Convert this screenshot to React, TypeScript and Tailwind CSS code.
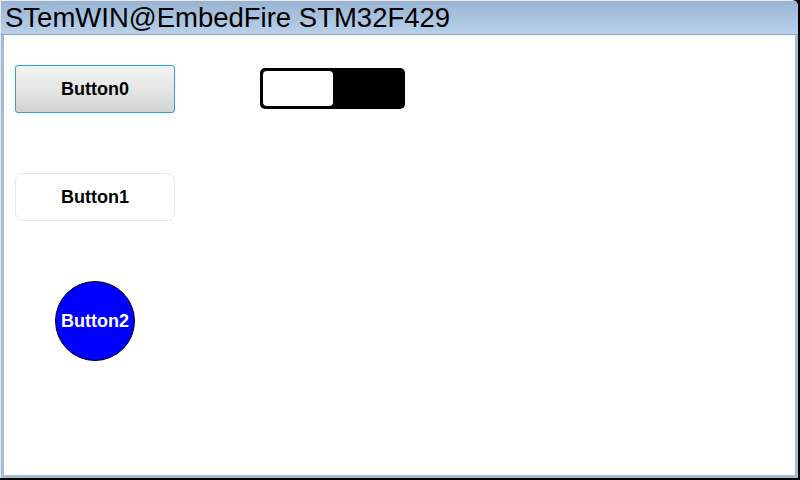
export default function App() {
  return (
    <div className="w-[800px] h-[480px] bg-black overflow-hidden" style={{ fontFamily: '"Liberation Sans", Arial, sans-serif' }}>
      <div className="w-[798px] h-[478px] flex flex-col bg-[#a4bcd8] border-t border-l border-[#e8e8e8] rounded-tr-[6px] pl-[3px] pr-[3px] pb-[3px]">
        <div className="h-[34px] flex items-center bg-gradient-to-b from-[#98b3d3] to-[#b9d1ea] border-b border-[#8aa6c8] -ml-[3px] -mr-[3px] rounded-tr-[6px]">
          <span className="text-[27.5px] leading-none text-black pl-[4px] pt-[1px]">STemWIN@EmbedFire STM32F429</span>
        </div>
        <div className="flex-1 bg-white relative">
          <div className="flex">
            <div className="flex flex-col pl-[11px] pt-[30px]">
              <button className="w-[160px] h-[48px] rounded-[3px] border border-[#2aa3dc] bg-gradient-to-b from-[#f3f3f3] via-[#e6e6e6] to-[#d2d2d2] font-bold text-[18px] text-black">
                Button0
              </button>
              <button className="w-[160px] h-[48px] mt-[60px] rounded-[8px] border border-[#e8e8e8] bg-white font-bold text-[18px] text-black">
                Button1
              </button>
              <div className="w-[160px] mt-[60px] flex justify-center">
                <button className="w-[80px] h-[80px] rounded-full border border-black bg-[#0000ff] font-bold text-[18px] text-white">
                  Button2
                </button>
              </div>
            </div>
            <div className="pl-[85px] pt-[33px]">
              <div className="w-[145px] h-[41px] rounded-[5px] bg-black p-[3px] flex">
                <div className="w-[70px] h-full bg-white rounded-[4px]" />
              </div>
            </div>
          </div>
        </div>
      </div>
    </div>
  );
}
